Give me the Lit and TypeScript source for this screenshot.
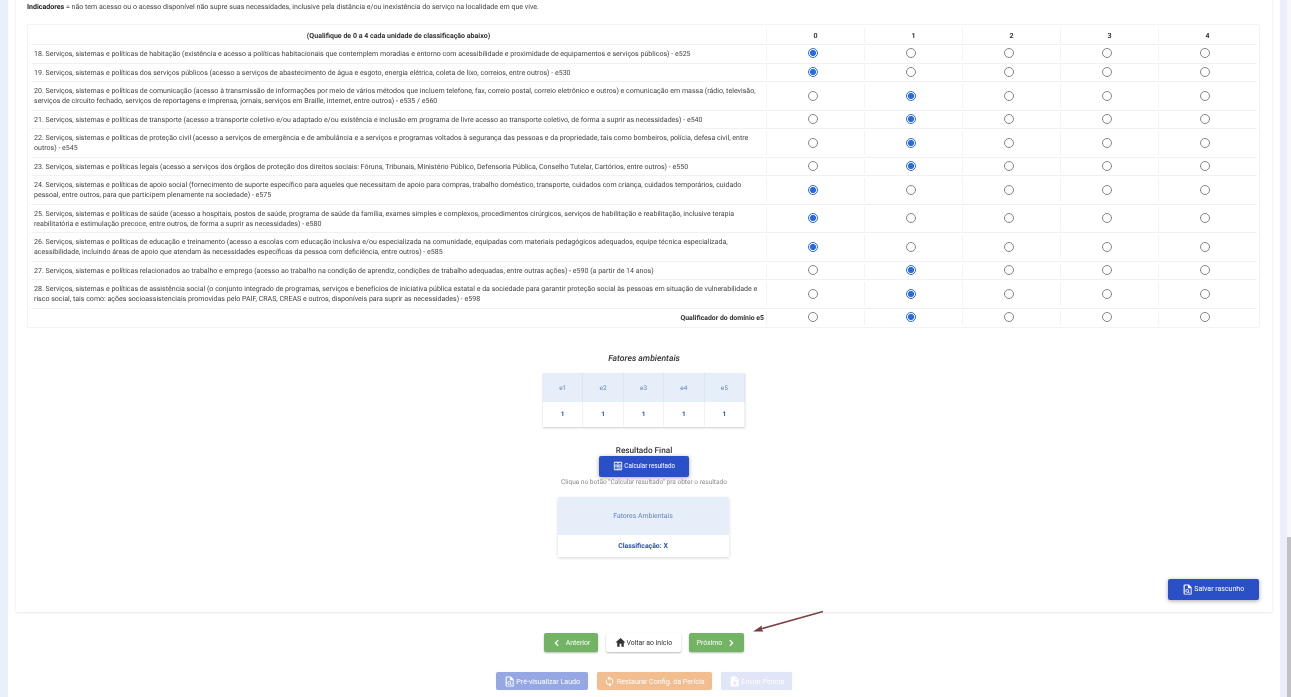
import { LitElement, html, css, svg } from "lit";
import { customElement } from "lit/decorators.js";

const rows: [string, number][] = [
  ["18. Serviços, sistemas e políticas de habitação (existência e acesso a políticas habitacionais que contemplem moradias e entorno com acessibilidade e proximidade de equipamentos e serviços públicos) - e525", 0],
  ["19. Serviços, sistemas e políticas dos serviços públicos (acesso a serviços de abastecimento de água e esgoto, energia elétrica, coleta de lixo, correios, entre outros) - e530", 0],
  ["20. Serviços, sistemas e políticas de comunicação (acesso à transmissão de informações por meio de vários métodos que incluem telefone, fax, correio postal, correio eletrônico e outros) e comunicação em massa (rádio, televisão, serviços de circuito fechado, serviços de reportagens e imprensa, jornais, serviços em Braille, internet, entre outros) - e535 / e560", 1],
  ["21. Serviços, sistemas e políticas de transporte (acesso a transporte coletivo e/ou adaptado e/ou existência e inclusão em programa de livre acesso ao transporte coletivo, de forma a suprir as necessidades) - e540", 1],
  ["22. Serviços, sistemas e políticas de proteção civil (acesso a serviços de emergência e de ambulância e a serviços e programas voltados à segurança das pessoas e da propriedade, tais como bombeiros, polícia, defesa civil, entre outros) - e545", 1],
  ["23. Serviços, sistemas e políticas legais (acesso a serviços dos órgãos de proteção dos direitos sociais: Fóruns, Tribunais, Ministério Público, Defensoria Pública, Conselho Tutelar, Cartórios, entre outros) - e550", 1],
  ["24. Serviços, sistemas e políticas de apoio social (fornecimento de suporte específico para aqueles que necessitam de apoio para compras, trabalho doméstico, transporte, cuidados com criança, cuidados temporários, cuidado pessoal, entre outros, para que participem plenamente na sociedade) - e575", 0],
  ["25. Serviços, sistemas e políticas de saúde (acesso a hospitais, postos de saúde, programa de saúde da família, exames simples e complexos, procedimentos cirúrgicos, serviços de habilitação e reabilitação, inclusive terapia reabilitatória e estimulação precoce, entre outros, de forma a suprir as necessidades) - e580", 0],
  ["26. Serviços, sistemas e políticas de educação e treinamento (acesso a escolas com educação inclusiva e/ou especializada na comunidade, equipadas com materiais pedagógicos adequados, equipe técnica especializada, acessibilidade, incluindo áreas de apoio que atendam às necessidades específicas da pessoa com deficiência, entre outros) - e585", 0],
  ["27. Serviços, sistemas e políticas relacionados ao trabalho e emprego (acesso ao trabalho na condição de aprendiz, condições de trabalho adequadas, entre outras ações) - e590 (a partir de 14 anos)", 1],
  ["28. Serviços, sistemas e políticas de assistência social (o conjunto integrado de programas, serviços e benefícios de iniciativa pública estatal e da sociedade para garantir proteção social às pessoas em situação de vulnerabilidade e risco social, tais como: ações socioassistenciais promovidas pelo PAIF, CRAS, CREAS e outros, disponíveis para suprir as necessidades) - e598", 1],
];

const fileSearch = svg`<path fill="currentColor" d="M6 1h9l6 6v16H6a2.500 2.500 0 0 1-2.500-2.500v-17A2.500 2.500 0 0 1 6 1zm0 2v18h13V9h-6V3H6z"/><circle cx="11.500" cy="15" r="3.200" fill="none" stroke="currentColor" stroke-width="2"/><path stroke="currentColor" stroke-width="2" d="M14 17.500l3 3"/>`;
const sync = svg`<path fill="currentColor" d="M12 4V0L7 5l5 5V6a6 6 0 0 1 5.200 9l1.600 1.600A8 8 0 0 0 12 4zm0 14a6 6 0 0 1-5.200-9L5.200 7.400A8 8 0 0 0 12 20v4l5-5-5-5v4z"/>`;
const calc = svg`<path fill="currentColor" d="M4 2h16a2 2 0 0 1 2 2v16a2 2 0 0 1-2 2H4a2 2 0 0 1-2-2V4a2 2 0 0 1 2-2zm0 2v7h7V4H4zm9 0v7h7V4h-7zM4 13v7h7v-7H4zm9 0v7h7v-7h-7zM5.500 7h4v1.200h-4V7zm9 0h4v1.200h-4V7zm0 8h4v1.200h-4V15zm0 2.500h4v1.200h-4v-1.200zM5.500 16h4v1.200h-4V16z"/>`;
const upload = svg`<path fill="currentColor" d="M6 1h9l6 6v16H3.500V3.500A2.500 2.500 0 0 1 6 1zm8 1.500V8h5.500L14 2.500zM12.500 11l-4.500 5h3v4h3v-4h3l-4.500-5z"/>`;
const home = svg`<path fill="currentColor" d="M10 21.500v-7h4v7h5.200V12H23L12 2 1 12h3.800v9.500z"/>`;
const left = svg`<path fill="none" stroke="currentColor" stroke-width="3" d="M15 5l-7 7 7 7"/>`;
const right = svg`<path fill="none" stroke="currentColor" stroke-width="3" d="M9 5l7 7-7 7"/>`;

const ico = (p: unknown) => html`<svg class="ico" viewBox="0 0 24 24">${p}</svg>`;

@customElement("app-root")
export class AppRoot extends LitElement {
  static styles = css`
    :host { display: block; font-family: Roboto, "Liberation Sans", sans-serif; text-rendering: geometricPrecision; color: #424242; }
    * { box-sizing: border-box; }
    .page { position: relative; display: flex; height: 697px; overflow: hidden; background: #fff; filter: blur(0.3px); }
    .rail { width: 8px; flex: none; background: #e9f0fc; }
    .main { flex: 1; min-width: 0; padding: 0 8px; display: flex; flex-direction: column; align-items: stretch; }
    .railr { width: 7px; flex: none; background: #e9f0fc; }
    .scroll { width: 4px; flex: none; display: flex; flex-direction: column; background: #f8f8f8; }
    .scroll i { display: block; height: 537px; flex: none; }
    .scroll b { display: block; flex: 1; background: #c1c1c1; }
    .card { height: 612px; background: #fff; padding: 0 11px; box-shadow: 0 1px 2px rgba(0,0,0,.08), 0 0 2px rgba(0,0,0,.06); display: flex; flex-direction: column; }
    .ind { font-size: 7.05px; line-height: 10px; padding-top: 1.5px; height: 23.5px; flex: none; }
    .ind b { font-weight: 700; color: #222; }
    .tbl { border: 1px solid #f3f3f3; border-radius: 1px; padding: 3.5px 2px 0 3px; width: 1233px; flex: none; }
    .row { display: grid; grid-template-columns: 735px repeat(5, 98px); padding: 1.7px 0 1.5px; border-bottom: 1px solid #f1f1f1; }
    .row.last { border-bottom: 0; padding-bottom: 2px; }
    .row.head { padding: 0 0 1px; }
    .row > div { min-height: 14.4px; display: flex; align-items: center; justify-content: center; }
    .row > div + div { border-left: 1px solid #f3f3f3; padding: 0 6px 1px 0; }
    .row > .txt { display: block; font-size: 7.05px; line-height: 9.9px; padding: 2.25px 6px 2.25px 3px; color: #444; }
    .head > div { font-size: 7.05px; font-weight: 700; color: #333; height: 15px; }
    .row.head > div + div { padding: 0; }
    .row > .qual { justify-content: flex-end; font-size: 6.9px; font-weight: 700; color: #333; padding-right: 2px; }
    input { appearance: none; -webkit-appearance: none; width: 10px; height: 10px; margin: 0; border-radius: 50%; border: 1px solid #858585; background: #fff; display: block; }
    input:checked { border-color: #2a6ae0; background: radial-gradient(circle, #2a6ae0 0 2.8px, #fff 3.2px); }
    .sec { display: flex; flex-direction: column; align-items: center; }
    .ftitle { font-size: 8.65px; font-style: italic; font-weight: 500; line-height: 10px; margin-top: 26px; color: #333; }
    .mini { margin-top: 9px; width: 202px; display: grid; grid-template-columns: repeat(5, 1fr); box-shadow: 0 1px 2px rgba(0,0,0,.2); }
    .mini span { display: flex; align-items: center; justify-content: center; font-size: 6.5px; }
    .mini .h { height: 29px; background: #e6eff9; color: #6484c4; border-right: 1px solid #dde7f4; }
    .mini .v { height: 24.500px; color: #2d50b5; font-weight: 700; background: #fff; border-right: 1px solid #f1f1f1; }
    .rtitle { margin-top: 19px; font-size: 8.2px; font-weight: 500; line-height: 10px; color: #333; }
    .btn { display: inline-flex; align-items: center; justify-content: center; gap: 1.5px; border: 0; border-radius: 2px; font: inherit; font-size: 6.6px; color: #fff; padding: 0; }
    .ico { width: 10px; height: 10px; display: block; flex: none; }
    .blue { background: #2b4fc7; box-shadow: 0 1px 4px rgba(0,0,0,.35); }
    .calc { width: 90px; height: 21px; font-size: 6.3px; }
    .hint { font-size: 6.55px; line-height: 10px; color: #8a8a8a; }
    .res { margin: 10px 2px 0 0; width: 171px; box-shadow: 0 1px 3px rgba(0,0,0,.16); text-align: center; }
    .res .h { height: 38px; background: #e6eff9; color: #6484c4; font-size: 6.9px; display: flex; align-items: center; justify-content: center; }
    .res .v { height: 22px; color: #2d50b5; font-weight: 700; font-size: 6.9px; display: flex; align-items: center; justify-content: center; background: #fff; }
    .save { display: flex; justify-content: flex-end; margin-top: 22px; padding-right: 2.5px; }
    .save .btn { width: 91px; height: 21px; font-size: 7px; }
    .save .ico { width: 11px; height: 11px; }
    .nav { display: flex; justify-content: center; gap: 8px; margin-top: 21px; }
    .nav .btn { height: 19px; box-shadow: 0 1px 2px rgba(0,0,0,.28); font-size: 6.9px; }
    .green { background: #72b463; }
    .prev { width: 54px; gap: 4px; } .next { width: 55px; gap: 4px; }
    .home { width: 75px; background: #fff; color: #333 !important; gap: 0.5px; }
    .home .ico { width: 11px; height: 11px; }
    .acts { display: flex; justify-content: center; gap: 9px; margin-top: 20px; }
    .acts .btn { height: 18px; font-size: 7.1px; box-shadow: 0 0 1px rgba(0,0,0,.12); }
    .acts .ico { width: 11px; height: 11px; }
    .a1 { width: 92px; background: #95a8e3; }
    .a2 { width: 115px; background: #f2bd8f; }
    .a3 { width: 71px; background: #e0e5f7; }
    .arrow { position: absolute; left: 745px; top: 605px; width: 85px; height: 32px; overflow: visible; }
  `;

  private radios(name: string, sel: number) {
    return [0, 1, 2, 3, 4].map(
      (i) => html`<div><input type="radio" name=${name} ?checked=${i === sel} /></div>`
    );
  }

  render() {
    return html`
      <div class="page">
        <div class="rail"></div>
        <div class="main">
          <div class="card">
            <div class="ind"><b>Indicadores</b> = não tem acesso ou o acesso disponível não supre suas necessidades, inclusive pela distância e/ou inexistência do serviço na localidade em que vive.</div>
            <div class="tbl">
              <div class="row head">
                <div>(Qualifique de 0 a 4 cada unidade de classificação abaixo)</div>
                ${[0, 1, 2, 3, 4].map((n) => html`<div>${n}</div>`)}
              </div>
              ${rows.map(
                ([t, s], i) => html`<div class="row"><div class="txt">${t}</div>${this.radios("r" + i, s)}</div>`
              )}
              <div class="row last"><div class="qual">Qualificador do domínio e5</div>${this.radios("q", 1)}</div>
            </div>
            <div class="sec">
              <div class="ftitle">Fatores ambientais</div>
              <div class="mini">
                ${["e1", "e2", "e3", "e4", "e5"].map((e) => html`<span class="h">${e}</span>`)}
                ${[1, 1, 1, 1, 1].map((v) => html`<span class="v">${v}</span>`)}
              </div>
              <div class="rtitle">Resultado Final</div>
              <button class="btn blue calc">${ico(calc)}Calcular resultado</button>
              <div class="hint">Clique no botão "Calcular resultado" pra obter o resultado</div>
              <div class="res">
                <div class="h">Fatores Ambientais</div>
                <div class="v">Classificação: X</div>
              </div>
            </div>
            <div class="save"><button class="btn blue">${ico(fileSearch)}Salvar rascunho</button></div>
          </div>
          <div class="nav">
            <button class="btn green prev">${ico(left)}Anterior</button>
            <button class="btn home">${ico(home)}Voltar ao início</button>
            <button class="btn green next">Próximo${ico(right)}</button>
          </div>
          <div class="acts">
            <button class="btn a1">${ico(fileSearch)}Pré-visualizar Laudo</button>
            <button class="btn a2">${ico(sync)}Restaurar Config. da Perícia</button>
            <button class="btn a3">${ico(upload)}Enviar Perícia</button>
          </div>
        </div>
        <div class="railr"></div>
        <div class="scroll"><i></i><b></b></div>
        <svg class="arrow" viewBox="0 0 85 32">
          <path d="M78 6.500L12 25" stroke="#7b4348" stroke-width="1.500" fill="none" />
          <path d="M8 26.500l9-6-.5 3.500 2 2.500z" fill="#7b3b40" />
        </svg>
      </div>
    `;
  }
}
